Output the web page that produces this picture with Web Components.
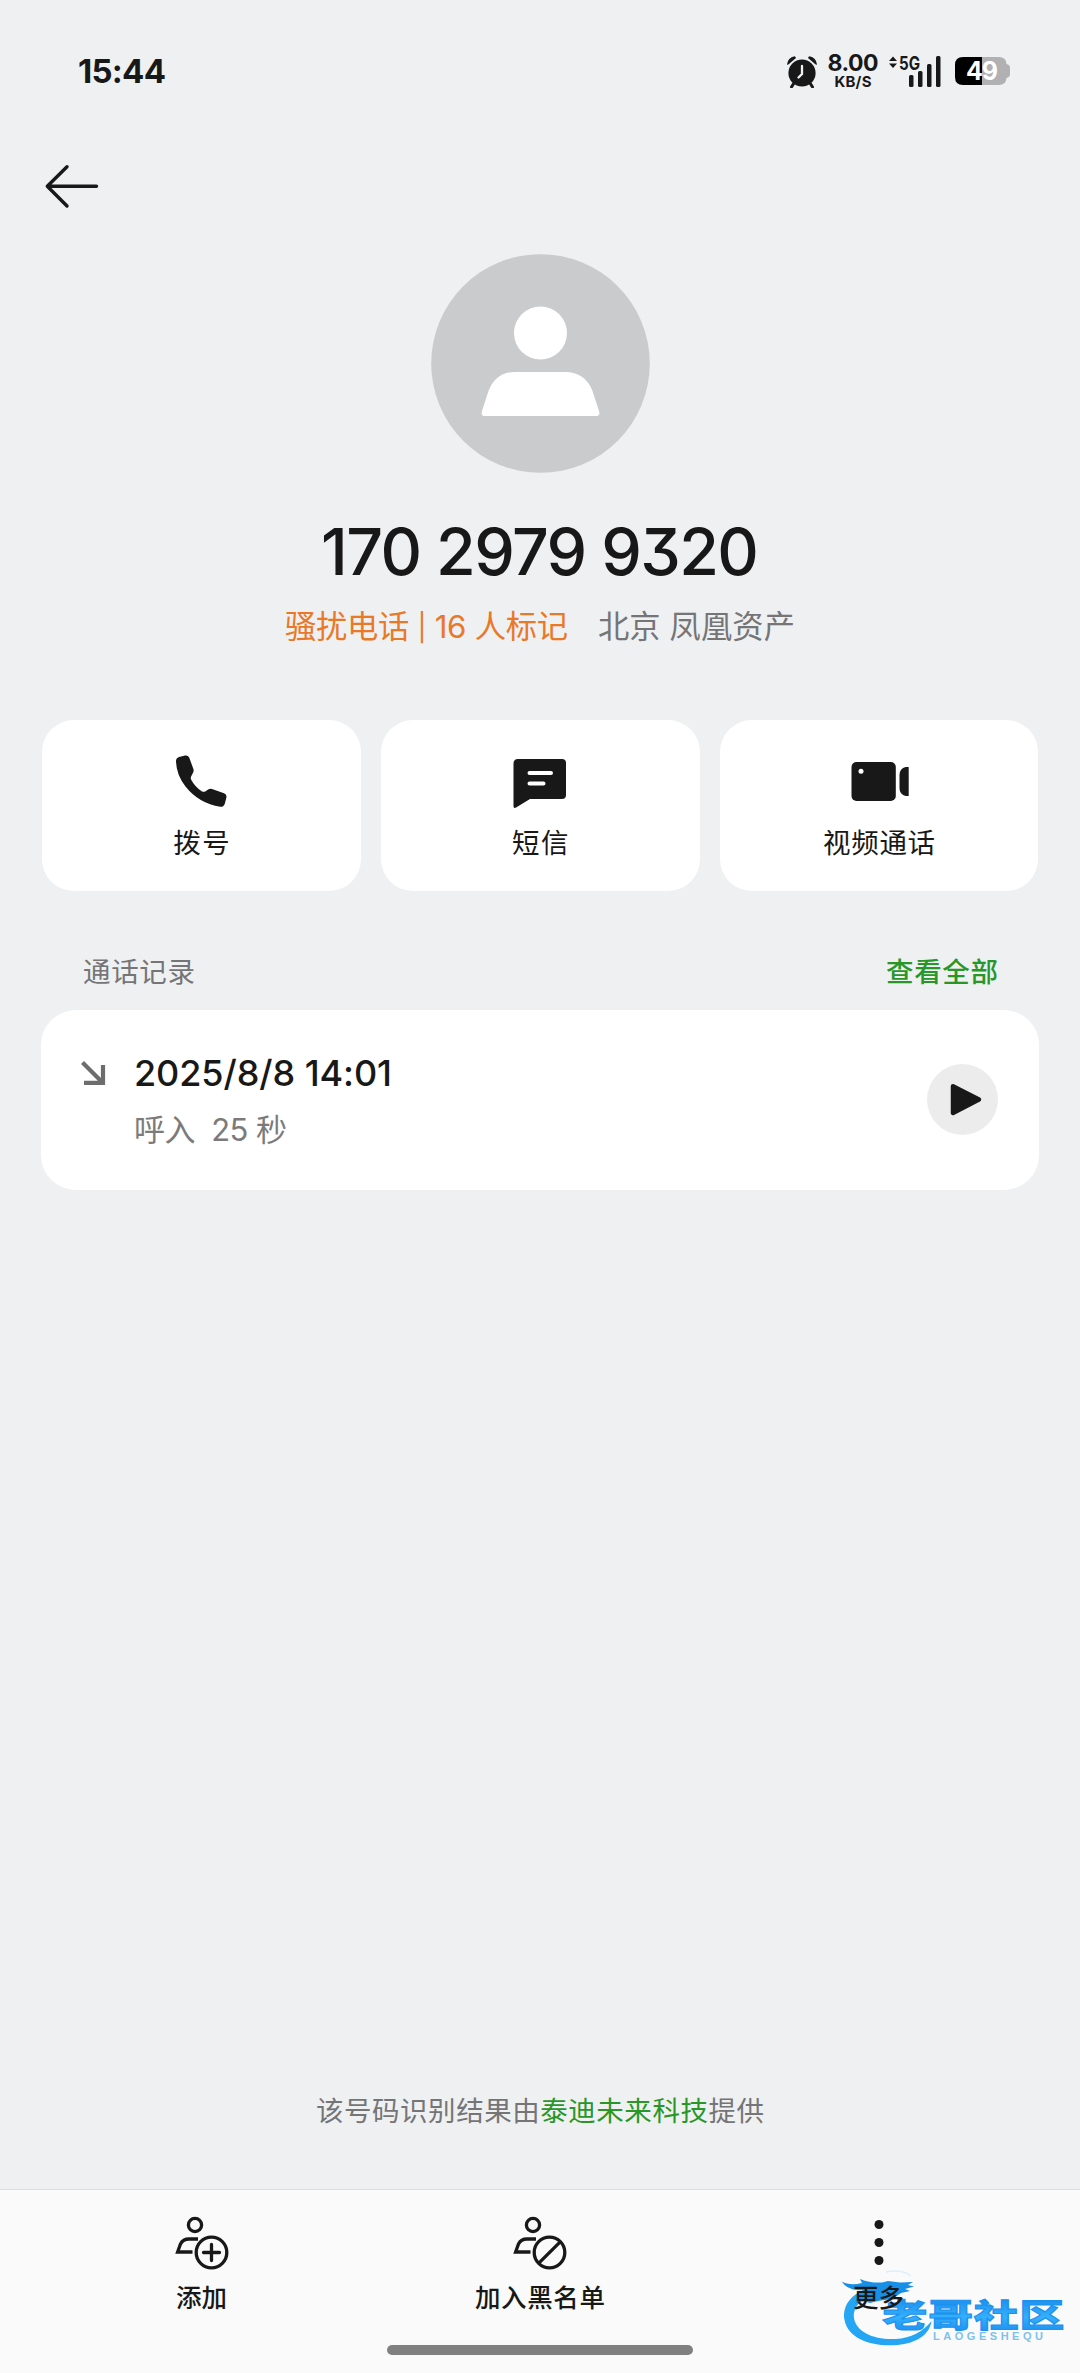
<!DOCTYPE html>
<html lang="zh-CN">
<head>
<meta charset="utf-8">
<title>通话详情</title>
<style>
html,body{margin:0;padding:0;background:#eff0f2}
body{font-family:Inter,"Noto Sans CJK SC",sans-serif;color:#181818}
</style>
</head>
<body>
<call-detail-page></call-detail-page>
<script>
const define=(name,html,after)=>{
  const t=document.createElement('template');t.innerHTML=html;
  customElements.define(name,class extends HTMLElement{
    connectedCallback(){
      if(this.shadowRoot)return;
      this.attachShadow({mode:'open'}).append(t.content.cloneNode(true));
      if(after)after.call(this,this.shadowRoot);
    }
  });
};

/* One line of text whose tracking is adjusted to fill the "w" attribute. */
define('fit-text',`<style>
:host{display:block;white-space:pre;flex:none}
span{display:inline-block;white-space:pre;vertical-align:top}
</style><span><slot></slot></span>`,function(r){
  const s=r.querySelector('span'),n=[...this.textContent].length,w=+this.getAttribute('w');
  if(!w||n<2)return;
  const ls=(w-s.getBoundingClientRect().width)/(n-1);
  s.style.letterSpacing=ls+'px';
  s.style.marginRight=-ls+'px';
});

define('status-bar',`<style>
:host{display:flex;height:142px;align-items:center;justify-content:space-between;padding:0 68px 0 78px;box-sizing:border-box}
.time{font-size:33px;font-weight:650;line-height:40px}
.right{display:flex;align-items:center;height:40px}
svg{display:block;flex:none}
.speed{display:flex;flex-direction:column;align-items:center;width:52px;margin:2px 9px 0 9px;font-weight:650}
.a{font-size:23px;line-height:19px}.b{font-size:15px;line-height:17px}
.sig{margin-right:14px}
</style>
<fit-text class="time" w="88">15:44</fit-text>
<div class="right">
<svg width="32" height="34" viewBox="0 0 32 34"><g fill="#181818"><circle cx="16" cy="19" r="13.6"/><path d="M1 10.5A9.5 9.5 0 0 1 8.5 2.300Q9.800 3 10 4L2.700 10.300Q1.800 11 1 10.500zM31 10.500A9.500 9.500 0 0 0 23.500 2.300Q22.200 3 22 4L29.300 10.300Q30.200 11 31 10.500z"/></g><path d="M8 29l-2.500 4M24 29l2.500 4" stroke="#181818" stroke-width="3" stroke-linecap="round"/><path d="M16 12v8l-3.500 3.500" stroke="#eff0f2" stroke-width="2.300" fill="none" stroke-linecap="round"/></svg>
<div class="speed"><fit-text class="a" w="51">8.00</fit-text><fit-text class="b" w="37">KB/S</fit-text></div>
<svg class="sig" width="53" height="34" viewBox="0 0 53 34"><g fill="#181818"><path d="M1 7l4-4.500L9 7zM1 9.500l4 4.500 4-4.500z"/><rect x="21" y="21" width="4.500" height="12" rx="1.500"/><rect x="30" y="17" width="4.500" height="16" rx="1.500"/><rect x="39" y="10" width="4.500" height="23" rx="1.500"/><rect x="48" y="2" width="4.500" height="31" rx="1.500"/><text x="11" y="15.500" font-size="18.500" font-weight="700" textLength="21" lengthAdjust="spacingAndGlyphs">5G</text></g></svg>
<svg width="57" height="30" viewBox="0 0 57 30"><path d="M27 1h17q7 0 7.500 7 3 .5 3.500 3v8q-.5 2.500-3.500 3-.5 7-7.500 7H27z" fill="#b1b1b3"/><path d="M27 1H8Q0 1 0 9v12q0 8 8 8h19z" fill="#000"/><text x="11" y="24" font-size="25" font-weight="700" fill="#fff" textLength="32">49</text></svg>
</div>`);

define('nav-bar',`<style>:host{display:flex;height:88px;align-items:center;padding-left:43px;box-sizing:border-box}svg{display:block}</style>
<svg width="58" height="48" viewBox="0 0 58 48"><path d="M53.500 24.300H4.500M24 4.800L4.300 24.300 24 44" fill="none" stroke="#181818" stroke-width="3.400" stroke-linecap="round" stroke-linejoin="round"/></svg>`);

define('contact-hero',`<style>
:host{display:flex;flex-direction:column;align-items:center;padding-top:24px}
svg{display:block}
.num{font-size:64.500px;font-weight:520;line-height:80px;margin-top:39px;font-feature-settings:"cv09"}
.sub{display:flex;gap:30px;margin-top:14.500px;font-size:31.300px;line-height:40px;color:#757577}
.tag{color:#e97828}
i{font-style:normal;font-size:27px;line-height:1;vertical-align:1px}
</style>
<svg width="219" height="219" viewBox="0 0 219 219"><circle cx="109.500" cy="109.500" r="109.300" fill="#cacbcc"/><g fill="#fff"><circle cx="109.500" cy="79" r="26.500"/><path d="M84 118h50q20 0 27.500 19l6.500 20q1.500 5-3 5H54q-4.500 0-3-5l6.500-20Q65 118 84 118z"/></g></svg>
<fit-text class="num" w="438">170 2979 9320</fit-text>
<div class="sub"><fit-text class="tag" w="283">骚扰电话 <i>|</i> 16 人标记</fit-text><fit-text w="197">北京 凤凰资产</fit-text></div>`);

define('action-card',`<style>
:host{display:flex;flex:1;flex-direction:column;align-items:center;height:171px;background:#fff;border-radius:32px;padding-top:30px;box-sizing:border-box;font-size:27.500px;line-height:36px}
.label{margin-top:14.500px}
</style><slot name="icon"></slot><div class="label"><slot></slot></div>`);

define('action-row',`<style>:host{display:flex;gap:20px;padding:0 41.500px 0 42px;margin-top:73.500px}svg{display:block;height:60px}</style>
<action-card><svg slot="icon" width="60" height="60" viewBox="0 0 60 60" fill="#181818"><path d="M5 11Q5 8 8 7l6-1.400q3-.6 4.300 2.200l4 11q.8 2-.3 4l-2 4q-.6 1.400.2 3 4 7.600 10.800 11.600 1.700.8 3.200.2l2.600-1.800q2-1.400 4.200-.7l12 4.200q3 1.200 2.400 4.200l-1.600 6.200q-1 3.400-4.500 3.100Q28 53.500 14.500 36.500 5.200 24.500 5 11z"/></svg><fit-text w="56.5">拨号</fit-text></action-card>
<action-card><svg slot="icon" width="60" height="60" viewBox="0 0 60 60"><path d="M8 9h44q4 0 4 4v32q0 4-4 4H20L6.500 57.200Q3.500 59 3.500 56V13.500Q3.500 9 8 9z" fill="#181818"/><path d="M19.500 23H41M19.500 33.600H33.500" stroke="#fff" stroke-width="4" stroke-linecap="round"/></svg><fit-text w="56.5">短信</fit-text></action-card>
<action-card><svg slot="icon" width="60" height="60" viewBox="0 0 60 60" fill="#181818"><rect x="2.500" y="12" width="44.300" height="39" rx="5"/><path d="M59.700 17v29h-3q-6.200-1.500-6.200-8V25q0-6.500 6.200-8z"/><circle cx="12" cy="21.300" r="2.500" fill="#fff"/></svg><fit-text w="112">视频通话</fit-text></action-card>`);

define('section-header',`<style>
:host{display:flex;justify-content:space-between;margin:61px 82px 0 83px;font-size:27.500px;line-height:40px;color:#757577}
.all{color:#289728;font-weight:500}
</style><fit-text w="112">通话记录</fit-text><fit-text class="all" w="112">查看全部</fit-text>`);

define('record-card',`<style>
:host{display:flex;height:180px;margin:18px 41px 0;background:#fff;border-radius:35px;box-sizing:border-box;padding:0 41.500px 0 39px;align-items:center}
svg{display:block;flex:none}
.arrow{align-self:flex-start;margin-top:49.500px}
.play{margin-bottom:1.500px}
.t{flex:1;margin-left:26px;align-self:flex-start;padding-top:41px}
.d{font-size:36px;font-weight:500;line-height:44px}
.s{font-size:31px;line-height:40px;color:#7b7b7b;margin-top:15px}
</style>
<svg class="arrow" width="28" height="28" viewBox="0 0 28 28"><path d="M2.500 2.500L23 23M23 5V22.800H4" fill="none" stroke="#6d6d6d" stroke-width="4.200"/></svg>
<div class="t"><fit-text class="d" w="258">2025/8/8 14:01</fit-text><fit-text class="s" w="153">呼入  25 秒</fit-text></div>
<svg class="play" width="71" height="71" viewBox="0 0 71 71"><circle cx="35.500" cy="35.500" r="35.500" fill="#ececec"/><path d="M26 22.300L52 35.500 26 49z" fill="#181818" stroke="#181818" stroke-width="4.500" stroke-linejoin="round"/></svg>`);

define('source-note',`<style>
:host{display:flex;justify-content:center;margin-top:auto;margin-bottom:58.500px;font-size:27.500px;line-height:40px;color:#757577}
a{color:#289728}
</style><fit-text w="448">该号码识别结果由<a>泰迪未来科技</a>提供</fit-text>`);

define('bar-item',`<style>
:host{display:flex;flex-direction:column;align-items:center;width:338.500px;font-size:25.500px;font-weight:500;line-height:34px}
.l{margin-top:6.500px}
</style><slot name="icon"></slot><div class="l"><slot></slot></div>`);

define('brand-mark',`<style>:host{display:block;width:240px;height:96px}svg{display:block}</style>
<svg width="240" height="96" viewBox="0 0 240 96">
<defs><linearGradient id="g" x1="0" y1="0" x2="0" y2="1"><stop offset="0" stop-color="#1180e8"/><stop offset=".6" stop-color="#33b0fb"/><stop offset="1" stop-color="#1788ee"/></linearGradient></defs>
<path d="M32 23C15 29 6 41 8.500 55c4 20 29 27 53 25 19-2 32-10 34-24-9 11-20 17-36 18C38 75 20 67 18 53c-1.500-11 8-20 20-25z" fill="#24a6f4"/>
<path d="M6 16.500c5 3 12 3.500 20 1.500l-2-4c8 3 14 4 22 3.500l6-1.500 12 1.500 13-.5-5 3 6 1.500-9 2.500 5 2-9 2-6 4 5 1.500c-14 1-22 2-30 4.500-7-2-10-2-15 1 2-6 5-10 8-14-8 1-18-2-21-8.500z" fill="#188fe6"/>
<path d="M50 7q16-3 25 4" fill="none" stroke="#dceffb" stroke-width="1.500"/>
<text transform="translate(46.500 61.500) scale(1.420 1)" font-family="Noto Sans CJK SC" font-weight="900" font-size="31.500" fill="url(#g)" stroke="#1d91ef" stroke-width="1" textLength="128">老哥社区</text>
<text x="97" y="75" font-size="11" font-weight="700" fill="#7fc0ec" font-family="Liberation Sans" textLength="110">LAOGESHEQU</text>
</svg>`);

define('bottom-bar',`<style>
:host{display:block;position:relative;height:184px;background:#fafafa;border-top:1px solid #dcdee2;box-sizing:border-box}
.items{display:flex;justify-content:center;padding-top:24px;position:relative;z-index:1}
svg{display:block}
.home{width:306px;height:10px;border-radius:5px;background:#808080;margin:30.500px auto 0}
brand-mark{position:absolute;left:836px;top:75px}
</style>
<div class="items">
<bar-item><svg slot="icon" width="58" height="60" viewBox="0 0 58 60" fill="none" stroke="#181818" stroke-width="3.300"><circle cx="22" cy="11" r="6.600"/><path d="M25 25H16Q10 25 7.500 30L4.600 38H19.500"/><circle cx="38.500" cy="38.500" r="15.300"/><path d="M38.500 30.500v16M30.500 38.500h16" stroke-linecap="round"/></svg><fit-text w="51">添加</fit-text></bar-item>
<bar-item><svg slot="icon" width="58" height="60" viewBox="0 0 58 60" fill="none" stroke="#181818" stroke-width="3.300"><circle cx="22" cy="11" r="6.600"/><path d="M25 25H16Q10 25 7.500 30L4.600 38H19.500"/><circle cx="38.500" cy="38.500" r="15.300"/><path d="M27.800 49.200L49.200 27.800"/></svg><fit-text w="130">加入黑名单</fit-text></bar-item>
<bar-item><svg slot="icon" width="58" height="60" viewBox="0 0 58 60" fill="#181818"><circle cx="29" cy="10.500" r="4.500"/><circle cx="29" cy="28.500" r="4.500"/><circle cx="29" cy="46.500" r="4.500"/></svg><fit-text w="51">更多</fit-text></bar-item>
</div>
<div class="home"></div>
<brand-mark></brand-mark>`);

define('call-detail-page',`<style>:host{display:flex;flex-direction:column;width:1080px;height:2373px;overflow:hidden;background:#eff0f2}</style>
<status-bar></status-bar><nav-bar></nav-bar><contact-hero></contact-hero><action-row></action-row><section-header></section-header><record-card></record-card><source-note></source-note><bottom-bar></bottom-bar>`);
</script>
</body>
</html>
